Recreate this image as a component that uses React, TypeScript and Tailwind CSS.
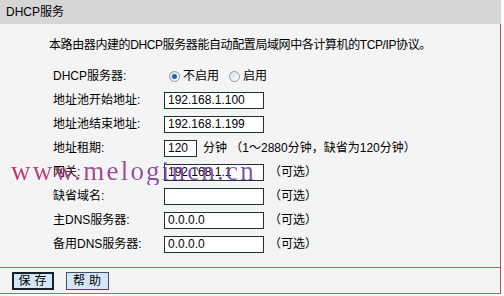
import React from 'react';

const cjk = { fontFamily: '"Liberation Sans", "Noto Sans CJK SC", sans-serif' };

type Row = { label: string; value: string; narrow?: boolean; note?: string };

const rows: Row[] = [
  { label: '地址池开始地址:', value: '192.168.1.100' },
  { label: '地址池结束地址:', value: '192.168.1.199' },
  { label: '地址租期:', value: '120', narrow: true, note: '分钟 （1～2880分钟，缺省为120分钟）' },
  { label: '网关:', value: '192.168.1.1', note: '（可选）' },
  { label: '缺省域名:', value: '', note: '（可选）' },
  { label: '主DNS服务器:', value: '0.0.0.0', note: '（可选）' },
  { label: '备用DNS服务器:', value: '0.0.0.0', note: '（可选）' },
];

function Radio({ checked }: { checked?: boolean }) {
  return (
    <span className="w-[11px] h-[11px] rounded-full border border-[#8a9aa8] bg-gradient-to-br from-[#d8dde2] to-white flex items-center justify-center">
      {checked && <span className="w-[5px] h-[5px] rounded-full bg-[#2a5fb0]" />}
    </span>
  );
}

export default function App() {
  return (
    <div className="w-[504px] h-[296px] bg-white text-[12px] text-black overflow-hidden relative" style={cjk}>
      {/* Title bar */}
      <div className="h-[24px] bg-[#d6d6d6] flex items-center pl-[6px] mr-[3px]">DHCP服务</div>

      {/* Body */}
      <div className="w-[501px] bg-[#f4f4f4] border-r border-[#b85050]">
        <p className="pt-[12px] pl-[49px] leading-[18px] tracking-[-0.4px]">
          本路由器内建的DHCP服务器能自动配置局域网中各计算机的TCP/IP协议。
        </p>

        <div className="mt-[10px] pl-[53px]">
          <div className="h-[24px] flex items-center">
            <span className="w-[116px]">DHCP服务器:</span>
            <label className="flex items-center gap-[3px]">
              <Radio checked />
              <span>不启用</span>
            </label>
            <label className="flex items-center gap-[3px] ml-[10px]">
              <Radio />
              <span>启用</span>
            </label>
          </div>

          {rows.map((r) => (
            <div key={r.label} className="h-[24px] flex items-center">
              <span className="w-[111px]">{r.label}</span>
              <div
                className={`h-[17px] border border-[#1e3434] bg-white flex items-center pl-[3px] ${
                  r.narrow ? 'w-[33px]' : 'w-[100px]'
                }`}
              >
                {r.value}
              </div>
              {r.note && (
                <span className={r.narrow ? 'ml-[6px]' : 'ml-[5px]'}>{r.note}</span>
              )}
            </div>
          ))}
        </div>

        {/* Buttons */}
        <div className="mt-[11px] h-[27px] border-y border-[#c06060] flex items-center gap-[12px] pl-[12px]">
          <button className="h-[18px] w-[42px] border-2 border-[#14242a] bg-[#d6e6f6] leading-none tracking-[4px] pl-[3px]">
            保存
          </button>
          <button className="h-[18px] w-[43px] border border-[#3c5468] bg-[#d6e6f6] leading-none tracking-[4px] pl-[3px]">
            帮助
          </button>
        </div>
      </div>

      {/* Watermark */}
      <div
        className="absolute left-[11px] top-[158px] text-[27px] leading-none tracking-[2.2px] bg-gradient-to-r from-[#c0205a] via-[#8a3a9a] to-[#6a40b0] bg-clip-text text-transparent opacity-90 pointer-events-none"
        style={{ fontFamily: '"Liberation Serif", serif' }}
      >
        www.melogincn.cn
      </div>
    </div>
  );
}
